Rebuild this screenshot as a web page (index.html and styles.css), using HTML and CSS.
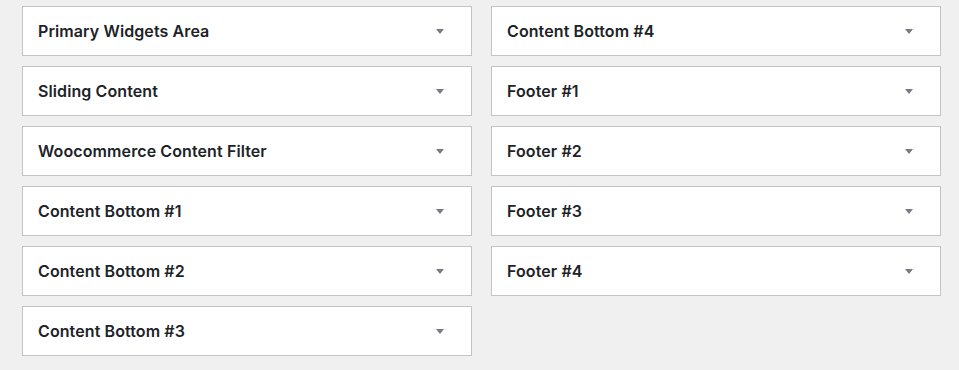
FILE: index.html
```html
<!DOCTYPE html>
<html lang="en">
<head>
    <meta charset="UTF-8">
    <title>Widgets</title>
    <link rel="stylesheet" href="styles.css">
</head>
<body>

<div class="sidebars">
    <div class="column">
        <div class="widget-area"><h3>Primary Widgets Area</h3><span class="toggle"></span></div>
        <div class="widget-area"><h3>Sliding Content</h3><span class="toggle"></span></div>
        <div class="widget-area"><h3>Woocommerce Content Filter</h3><span class="toggle"></span></div>
        <div class="widget-area"><h3>Content Bottom #1</h3><span class="toggle"></span></div>
        <div class="widget-area"><h3>Content Bottom #2</h3><span class="toggle"></span></div>
        <div class="widget-area"><h3>Content Bottom #3</h3><span class="toggle"></span></div>
    </div>
    <div class="column">
        <div class="widget-area"><h3>Content Bottom #4</h3><span class="toggle"></span></div>
        <div class="widget-area"><h3>Footer #1</h3><span class="toggle"></span></div>
        <div class="widget-area"><h3>Footer #2</h3><span class="toggle"></span></div>
        <div class="widget-area"><h3>Footer #3</h3><span class="toggle"></span></div>
        <div class="widget-area"><h3>Footer #4</h3><span class="toggle"></span></div>
    </div>
</div>

</body>
</html>
```
FILE: styles.css
```css
body {
    margin: 0;
    background-color: #f0f0f1;
    font-family: Inter, "Noto Sans", sans-serif;
    color: #1d2327;
}
.sidebars {
    display: flex;
    gap: 19px;
    padding: 6px 0 0 22px;
}
.column {
    width: 450px;
    display: flex;
    flex-direction: column;
    gap: 10px;
}
.widget-area {
    height: 48px;
    background: #fff;
    border: 1px solid #c3c4c7;
    display: flex;
    align-items: center;
    justify-content: space-between;
    padding: 0 27px 0 15px;
}
.widget-area h3 {
    margin: 0;
    font-size: 16px;
    font-weight: 600;
    letter-spacing: 0.1px;
}
.toggle {
    width: 0;
    height: 0;
    border-left: 4px solid transparent;
    border-right: 4px solid transparent;
    border-top: 5px solid #787c82;
}
```
